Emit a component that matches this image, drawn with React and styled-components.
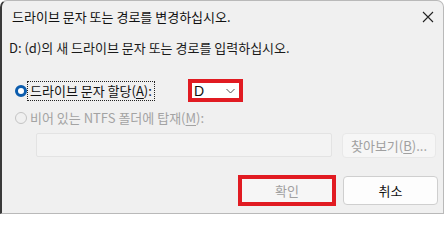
import React from 'react';
import styled, { createGlobalStyle } from 'styled-components';

const GlobalStyle = createGlobalStyle`
  html, body {
    margin: 0;
    padding: 0;
    background: #ffffff;
  }
  body {
    font-family: "Noto Sans CJK KR", "Noto Sans", sans-serif;
    font-size: 13px;
    color: #1a1a1a;
  }
`;

const Window = styled.div`
  box-sizing: border-box;
  width: 444px;
  height: 214px;
  background: #f0f0f0;
  border: 1px solid #b9b9b9;
  border-left: 2px solid #3a3a3a;
  border-top-left-radius: 7px;
  border-top-right-radius: 7px;
  display: flex;
  flex-direction: column;
`;

const TitleBar = styled.div`
  height: 31px;
  display: flex;
  align-items: center;
  justify-content: space-between;
  padding: 0 9px 0 10px;
  color: #111;
`;

const CloseIcon = () => (
  <svg width="12" height="12" viewBox="0 0 12 12">
    <path d="M1 1 L11 11 M11 1 L1 11" stroke="#222" strokeWidth="1.1" fill="none" />
  </svg>
);

const Content = styled.div`
  display: flex;
  flex-direction: column;
  padding: 0 5px 0 7px;
`;

const Instruction = styled.div`
  margin-top: 8px;
  line-height: 16px;
`;

const OptionRow = styled.div`
  display: flex;
  align-items: center;
  width: ${p => (p.$width ? `${p.$width}px` : 'auto')};
  height: ${p => p.$height || 16}px;
  margin-top: ${p => p.$top}px;
`;

const Radio = styled.span`
  box-sizing: border-box;
  width: 12px;
  height: 12px;
  margin-left: 6px;
  border-radius: 50%;
  flex-shrink: 0;
  background: ${p => (p.$checked ? '#ffffff' : 'transparent')};
  border: ${p => (p.$checked ? '3.5px solid #0b5cad' : '1px solid #c4c4c4')};
`;

const OptionLabel = styled.span`
  margin-left: 2px;
  padding: 0 1px;
  line-height: 16px;
  color: ${p => (p.$disabled ? '#a3a3a3' : '#111')};
  outline: ${p => (p.$focused ? '1px dotted #222' : 'none')};
  outline-offset: 1px;
  white-space: nowrap;
`;

const Key = styled.u`
  text-underline-offset: 2px;
`;

const DriveSelect = styled.div`
  box-sizing: border-box;
  width: 55px;
  height: 23px;
  margin-left: auto;
  border: 4px solid #e11b22;
  background: #ffffff;
  display: flex;
  align-items: center;
  justify-content: space-between;
  padding: 0 4px 0 2px;
  font-family: "Liberation Sans", sans-serif;
  font-size: 14px;
  color: #111;
`;

const Chevron = () => (
  <svg width="9" height="6" viewBox="0 0 9 6">
    <path d="M0.5 1 L4.5 5 L8.5 1" stroke="#555" strokeWidth="1" fill="none" />
  </svg>
);

const PathRow = styled.div`
  display: flex;
  margin-top: 7px;
  margin-left: 27px;
  gap: 10px;
`;

const PathInput = styled.div`
  box-sizing: border-box;
  width: 296px;
  height: 24px;
  background: #f3f3f3;
  border: 1px solid #e3e3e3;
  border-radius: 2px;
`;

const Button = styled.div`
  box-sizing: border-box;
  width: ${p => p.$width}px;
  height: ${p => p.$height}px;
  display: flex;
  align-items: center;
  justify-content: center;
  border-radius: 4px;
  background: ${p => (p.$disabled ? '#f6f6f6' : '#fdfdfd')};
  border: 1px solid ${p => (p.$disabled ? '#e8e8e8' : '#cfcfcf')};
  color: ${p => (p.$disabled ? '#a0a0a0' : '#111')};
`;

const Footer = styled.div`
  display: flex;
  align-items: center;
  justify-content: flex-end;
  gap: 7px;
  margin-top: 17px;
`;

const Highlight = styled.div`
  box-sizing: border-box;
  width: 98px;
  height: 31px;
  border: 4px solid #e11b22;
  display: flex;
`;

const OkButton = styled.div`
  flex: 1;
  display: flex;
  align-items: center;
  justify-content: center;
  background: #f6f6f6;
  color: #a0a0a0;
`;

export default function App() {
  return (
    <>
      <GlobalStyle />
      <Window>
        <TitleBar>
          <span>드라이브 문자 또는 경로를 변경하십시오.</span>
          <CloseIcon />
        </TitleBar>
        <Content>
          <Instruction>D: (d)의 새 드라이브 문자 또는 경로를 입력하십시오.</Instruction>
          <OptionRow $top={23} $height={23} $width={234}>
            <Radio $checked />
            <OptionLabel $focused>
              드라이브 문자 할당(<Key>A</Key>):
            </OptionLabel>
            <DriveSelect>
              <span>D</span>
              <Chevron />
            </DriveSelect>
          </OptionRow>
          <OptionRow $top={8}>
            <Radio />
            <OptionLabel $disabled>
              비어 있는 NTFS 폴더에 탑재(<Key>M</Key>):
            </OptionLabel>
          </OptionRow>
          <PathRow>
            <PathInput />
            <Button $disabled $width={94} $height={25}>
              찾아보기(<Key>B</Key>)...
            </Button>
          </PathRow>
          <Footer>
            <Highlight>
              <OkButton>확인</OkButton>
            </Highlight>
            <Button $width={95} $height={29}>취소</Button>
          </Footer>
        </Content>
      </Window>
    </>
  );
}
